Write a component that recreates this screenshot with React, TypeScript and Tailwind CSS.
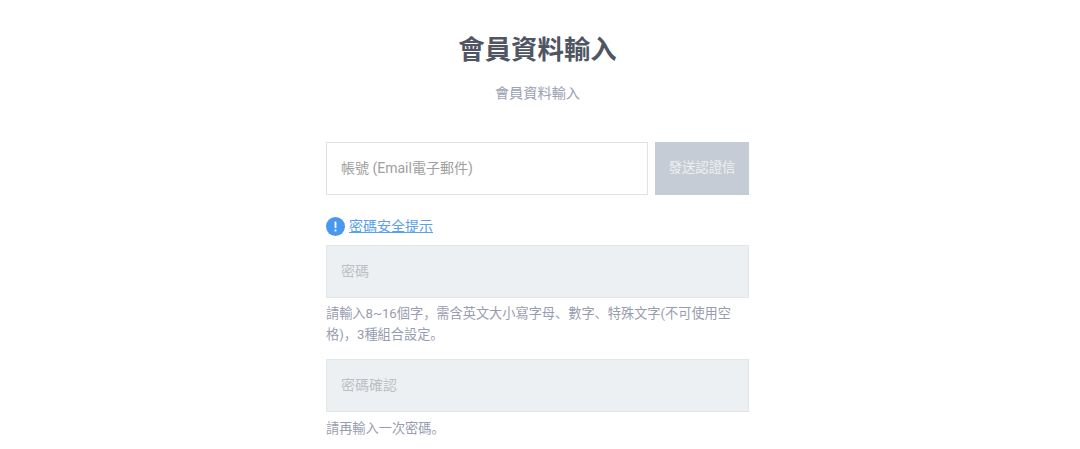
export default function App() {
  return (
    <div className="w-[1080px] h-[449px] overflow-hidden bg-white pr-[5px] flex flex-col items-center font-['Roboto','Noto_Sans_CJK_SC',sans-serif]">
      <h1 className="mt-[31px] text-[26.4px] leading-[38px] font-bold text-[#4f5562]">會員資料輸入</h1>
      <p className="mt-[14px] text-[14.2px] leading-[20px] text-[#9aa1b1]">會員資料輸入</p>
      <div className="w-[423px] mt-[39px] flex flex-col">
        <div className="flex gap-[7px]">
          <div className="flex-1 h-[53px] border border-[#dfe1e6] flex items-center px-[14px] pb-[1px] text-[14px] text-[#a0a0a0]">帳號 (Email電子郵件)</div>
          <div className="w-[94px] h-[53px] bg-[#c5ccd6] flex items-center justify-center text-[13.4px] text-[#eef0f3]">發送認證信</div>
        </div>
        <div className="mt-[21px] flex items-center gap-[4px] h-[20px]">
          <svg width="19" height="19" viewBox="0 0 19 19"><circle cx="9.5" cy="9.5" r="9.5" fill="#4a98ee"/><rect x="8.6" y="4.5" width="1.8" height="6.5" rx="0.6" fill="#fff"/><rect x="8.6" y="12.5" width="1.8" height="1.9" fill="#fff"/></svg>
          <span className="text-sm text-[#5aa0ea] underline">密碼安全提示</span>
        </div>
        <div className="mt-[9px] h-[53px] bg-[#edf0f3] border border-[#e3e5e9] flex items-center px-[14px] pb-[1px] text-sm text-[#bcbfc3]">密碼</div>
        <p className="mt-[5px] text-[13.2px] leading-[21px] text-[#979daf]">請輸入8~16個字，需含英文大小寫字母、數字、特殊文字(不可使用空格)，3種組合設定。</p>
        <div className="mt-[14px] h-[53px] bg-[#edf0f3] border border-[#e3e5e9] flex items-center px-[14px] pb-[1px] text-sm text-[#bcbfc3]">密碼確認</div>
        <p className="mt-[6px] text-[13.2px] leading-[21px] text-[#979daf]">請再輸入一次密碼。</p>
      </div>
    </div>
  );
}
